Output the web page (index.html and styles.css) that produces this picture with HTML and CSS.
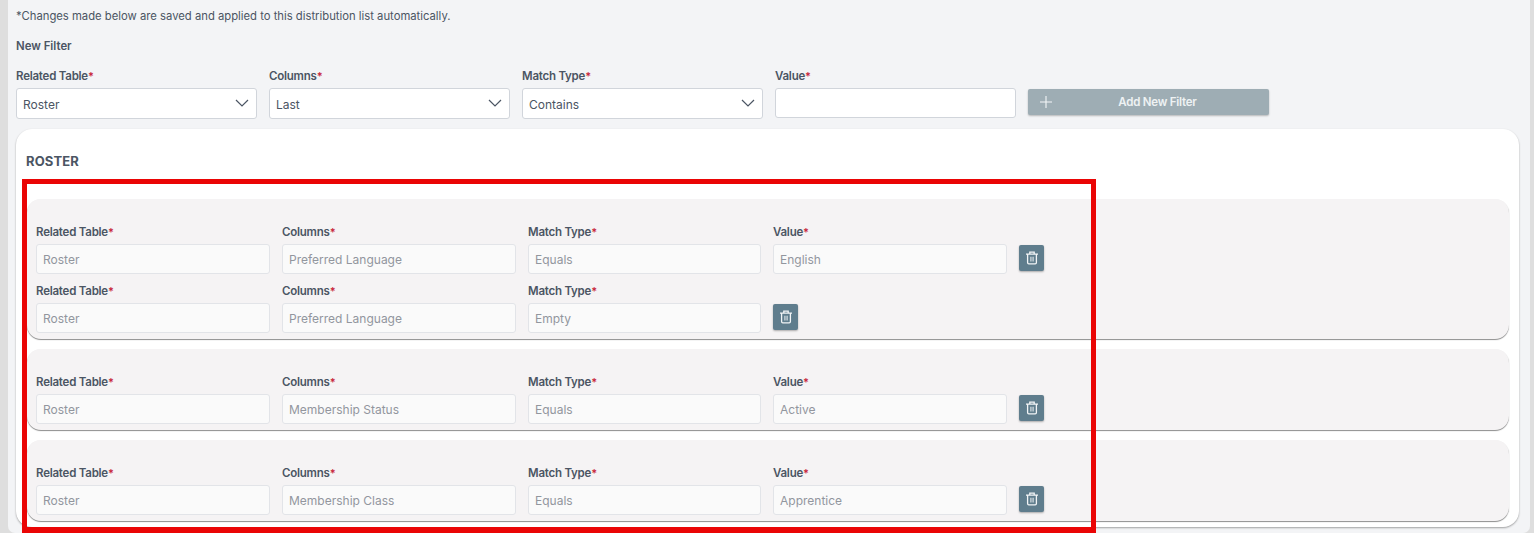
FILE: index.html
```html
<!DOCTYPE html>
<html lang="en">
<head>
<meta charset="utf-8">
<title>Distribution list filters</title>
<link rel="stylesheet" href="styles.css">
</head>
<body>
<svg class="defs" width="0" height="0" aria-hidden="true">
  <symbol id="chev" viewBox="0 0 14 8"><path d="M1 1l6 6 6-6" fill="none" stroke="#4b5563" stroke-width="1.2"/></symbol>
  <symbol id="trash" viewBox="0 0 14 14"><path d="M1 3.2h12M4.8 3V1.2h4.4V3M2.6 3.2v8.4q0 1.2 1.2 1.2h6.4q1.2 0 1.2-1.2V3.2" fill="none" stroke="#f1f4f6" stroke-width="1.3"/><path d="M5.2 5.8h1.4v4.8H5.2zM7.4 5.8h1.4v4.8H7.4z" fill="#c9d4da"/></symbol>
</svg>
<main class="page">
  <p class="note">*Changes made below are saved and applied to this distribution list automatically.</p>
  <h2 class="new-title">New Filter</h2>
  <form class="new-filter">
    <div class="field"><label class="lbl">Related Table<i>*</i></label><div class="select">Roster<svg class="chev"><use href="#chev"/></svg></div></div>
    <div class="field"><label class="lbl">Columns<i>*</i></label><div class="select">Last<svg class="chev"><use href="#chev"/></svg></div></div>
    <div class="field"><label class="lbl">Match Type<i>*</i></label><div class="select">Contains<svg class="chev"><use href="#chev"/></svg></div></div>
    <div class="field"><label class="lbl">Value<i>*</i></label><div class="text-input"></div></div>
    <button type="button" class="add-btn"><svg class="plus" viewBox="0 0 12 12"><path d="M6 0v12M0 6h12" stroke="#f4f6f7" stroke-width="1.1"/></svg><span>Add New Filter</span></button>
  </form>
  <section class="card">
    <h3 class="card-title">ROSTER</h3>
    <div class="group">
      <div class="line">
        <div class="field"><label class="lbl">Related Table<i>*</i></label><div class="ro">Roster</div></div>
        <div class="field"><label class="lbl">Columns<i>*</i></label><div class="ro">Preferred Language</div></div>
        <div class="field"><label class="lbl">Match Type<i>*</i></label><div class="ro">Equals</div></div>
        <div class="field"><label class="lbl">Value<i>*</i></label><div class="ro">English</div></div>
        <button type="button" class="del"><svg class="trash"><use href="#trash"/></svg></button>
      </div>
      <div class="line">
        <div class="field"><label class="lbl">Related Table<i>*</i></label><div class="ro">Roster</div></div>
        <div class="field"><label class="lbl">Columns<i>*</i></label><div class="ro">Preferred Language</div></div>
        <div class="field"><label class="lbl">Match Type<i>*</i></label><div class="ro">Empty</div></div>
        <button type="button" class="del"><svg class="trash"><use href="#trash"/></svg></button>
      </div>
    </div>
    <div class="group">
      <div class="line">
        <div class="field"><label class="lbl">Related Table<i>*</i></label><div class="ro">Roster</div></div>
        <div class="field"><label class="lbl">Columns<i>*</i></label><div class="ro">Membership Status</div></div>
        <div class="field"><label class="lbl">Match Type<i>*</i></label><div class="ro">Equals</div></div>
        <div class="field"><label class="lbl">Value<i>*</i></label><div class="ro">Active</div></div>
        <button type="button" class="del"><svg class="trash"><use href="#trash"/></svg></button>
      </div>
    </div>
    <div class="group">
      <div class="line">
        <div class="field"><label class="lbl">Related Table<i>*</i></label><div class="ro">Roster</div></div>
        <div class="field"><label class="lbl">Columns<i>*</i></label><div class="ro">Membership Class</div></div>
        <div class="field"><label class="lbl">Match Type<i>*</i></label><div class="ro">Equals</div></div>
        <div class="field"><label class="lbl">Value<i>*</i></label><div class="ro">Apprentice</div></div>
        <button type="button" class="del"><svg class="trash"><use href="#trash"/></svg></button>
      </div>
    </div>
  </section>
</main>
<div class="annotation"></div>
</body>
</html>
```
FILE: styles.css
```css
* { box-sizing: border-box; }
html, body { height: 100%; }
body {
  margin: 0;
  height: 533px;
  overflow: hidden;
  background: #dedede;
  padding: 0 4px 0 8px;
  font-family: Inter, Roboto, "Liberation Sans", sans-serif;
  color: #4b5563;
  position: relative;
}
.defs { position: absolute; }
.page {
  height: 533px;
  background: #f3f4f6;
  border-radius: 0 0 7px 7px;
  padding: 9px 11px 0 8px;
  overflow: hidden;
}
.note { margin: 0; font-size: 11.28px; line-height: 14px; }
.new-title { margin: 16px 0 0; font-size: 11.4px; line-height: 14px; font-weight: 600; }
.new-filter {
  display: grid;
  grid-template-columns: repeat(4, 241px) 241px;
  column-gap: 12px;
  margin-top: 16px;
}
.field { display: flex; flex-direction: column; }
.lbl { font-size: 11.5px; line-height: 14px; font-weight: 600; letter-spacing: -.02em; }
.lbl i { color: #c8283c; font-style: normal; font-size: 11px; }
.select, .text-input {
  margin-top: 5px;
  background: #fff;
  border: 1px solid #d1d5db;
  border-radius: 3px;
  font-size: 12px;
  display: flex;
  align-items: center;
  justify-content: space-between;
  padding: 1px 6px 0;
}
.select { height: 31px; }
.text-input { height: 30px; }
.chev { width: 14px; height: 8px; margin-right: 1px; margin-top: -3px; }
.add-btn {
  align-self: start;
  margin-top: 20px;
  height: 26px;
  border: 0;
  border-radius: 2px;
  background: #9eadb4;
  color: #eef2f3;
  font: 600 11.5px Inter, Roboto, "Liberation Sans", sans-serif;
  letter-spacing: -.02em;
  display: flex;
  align-items: center;
  padding: 0 12px;
  box-shadow: 0 1px 2px rgba(0,0,0,.25);
}
.plus { width: 12px; height: 12px; }
.add-btn span { flex: 1; text-align: center; padding-left: 6px; }
.card {
  margin-top: 10px;
  height: 398px;
  background: #fff;
  border-radius: 16px;
  padding: 25px 10px 6px 10px;
  box-shadow: 0 1px 2px rgba(0,0,0,.35);
  display: flex;
  flex-direction: column;
  gap: 10px;
}
.card-title { margin: 0 0 21px; font-size: 13px; line-height: 14px; font-weight: 700; letter-spacing: .01em; }
.group {
  background: #f5f3f4;
  border-radius: 14px;
  margin-left: 1px;
  padding: 26px 0 6px 9px;
  box-shadow: 0 1px 1px rgba(0,0,0,.45);
  display: flex;
  flex-direction: column;
  gap: 10px;
}
.line { display: flex; gap: 12px; align-items: flex-end; }
.line .field:nth-child(1), .line .field:nth-child(2) { width: 234px; }
.line .field:nth-child(3) { width: 233px; }
.line .field:nth-child(4) { width: 234px; }
.ro {
  margin-top: 5px;
  height: 30px;
  background: #fafafa;
  border: 1px solid #e2e4e8;
  border-radius: 3px;
  font-size: 12px;
  line-height: 29px;
  padding: 0 6px;
  color: #92969e;
}
.del {
  width: 25px;
  height: 26px;
  margin-bottom: 3px;
  padding: 0;
  border: 0;
  border-radius: 2px;
  background: #5f7d8d;
  box-shadow: 0 1px 2px rgba(0,0,0,.3);
  display: flex;
  align-items: center;
  justify-content: center;
}
.trash { width: 14px; height: 14px; }
.annotation {
  position: absolute;
  left: 22px;
  top: 179px;
  width: 1074px;
  height: 354px;
  border: 5px solid #ea0505;
  border-bottom-width: 6px;
  pointer-events: none;
}
```
